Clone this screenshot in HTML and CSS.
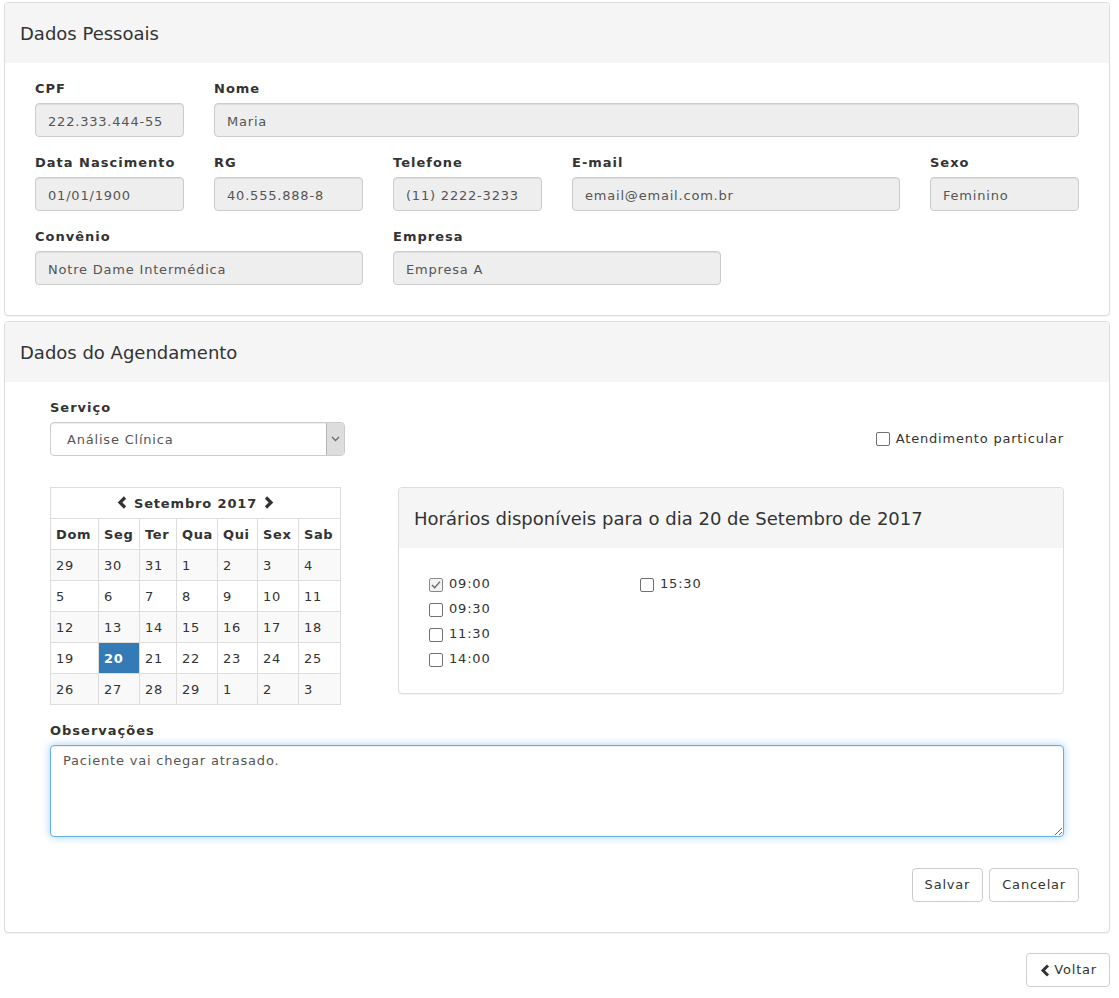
FILE: index.html
```html
<!DOCTYPE html>
<html lang="pt-BR">
<head>
<meta charset="utf-8">
<title>Agendamento</title>
<link rel="stylesheet" href="styles.css">
</head>
<body>
<div class="page">
  <section class="panel">
    <div class="panel-heading"><h3 class="panel-title">Dados Pessoais</h3></div>
    <div class="panel-body personal">
      <div class="field span-2"><label>CPF</label><input class="form-control" readonly value="222.333.444-55"></div>
      <div class="field span-10"><label>Nome</label><input class="form-control" readonly value="Maria"></div>
      <div class="field span-2"><label>Data Nascimento</label><input class="form-control" readonly value="01/01/1900"></div>
      <div class="field span-2"><label>RG</label><input class="form-control" readonly value="40.555.888-8"></div>
      <div class="field span-2"><label>Telefone</label><input class="form-control" readonly value="(11) 2222-3233"></div>
      <div class="field span-4"><label>E-mail</label><input class="form-control" readonly value="email@email.com.br"></div>
      <div class="field span-2"><label>Sexo</label><input class="form-control" readonly value="Feminino"></div>
      <div class="field span-4"><label>Convênio</label><input class="form-control" readonly value="Notre Dame Intermédica"></div>
      <div class="field span-4"><label>Empresa</label><input class="form-control" readonly value="Empresa A"></div>
    </div>
  </section>

  <section class="panel">
    <div class="panel-heading"><h3 class="panel-title">Dados do Agendamento</h3></div>
    <div class="panel-body agenda">
      <div class="agenda-fields">
        <div class="service-row">
          <div class="field service">
            <label>Serviço</label>
            <div class="select-wrap">
              <select class="form-control select"><option>Análise Clínica</option></select>
              <span class="select-arrow"><svg width="9" height="6" viewBox="0 0 9 6"><path d="M1 1 L4.5 4.5 L8 1" fill="none" stroke="#6a6a6a" stroke-width="1.3"/></svg></span>
            </div>
          </div>
          <label class="check-label">
            <svg class="box" width="14" height="14" viewBox="0 0 14 14"><rect x="0.5" y="0.5" width="13" height="13" rx="1.5" fill="#fff" stroke="#707070"/></svg>
            Atendimento particular
          </label>
        </div>

        <div class="schedule-row">
          <table class="calendar">
            <colgroup><col class="c1"><col class="c2"><col class="c3"><col class="c4"><col class="c5"><col class="c6"><col class="c7"></colgroup>
            <thead>
              <tr><th colspan="7" class="month">
                <svg class="chev" width="10" height="13" viewBox="0 0 10 13"><path d="M8 1.5 L3 6.5 L8 11.5" fill="none" stroke="#333" stroke-width="3.2"/></svg>
                <span>Setembro 2017</span>
                <svg class="chev" width="10" height="13" viewBox="0 0 10 13"><path d="M2 1.5 L7 6.5 L2 11.5" fill="none" stroke="#333" stroke-width="3.2"/></svg>
              </th></tr>
              <tr class="days"><th>Dom</th><th>Seg</th><th>Ter</th><th>Qua</th><th>Qui</th><th>Sex</th><th>Sab</th></tr>
            </thead>
            <tbody>
              <tr class="odd"><td>29</td><td>30</td><td>31</td><td>1</td><td>2</td><td>3</td><td>4</td></tr>
              <tr><td>5</td><td>6</td><td>7</td><td>8</td><td>9</td><td>10</td><td>11</td></tr>
              <tr class="odd"><td>12</td><td>13</td><td>14</td><td>15</td><td>16</td><td>17</td><td>18</td></tr>
              <tr><td>19</td><td class="active">20</td><td>21</td><td>22</td><td>23</td><td>24</td><td>25</td></tr>
              <tr class="odd"><td>26</td><td>27</td><td>28</td><td>29</td><td>1</td><td>2</td><td>3</td></tr>
            </tbody>
          </table>

          <div class="panel slots">
            <div class="panel-heading"><h3 class="panel-title">Horários disponíveis para o dia 20 de Setembro de 2017</h3></div>
            <div class="slots-body">
              <label class="slot"><svg class="box" width="14" height="14" viewBox="0 0 14 14"><rect x="0.5" y="0.5" width="13" height="13" rx="1.5" fill="#f2f2f2" stroke="#8a8a8a"/><path d="M3 7 L5.6 9.8 L11 3.6" fill="none" stroke="#666" stroke-width="1.3"/></svg>09:00</label>
              <label class="slot"><svg class="box" width="14" height="14" viewBox="0 0 14 14"><rect x="0.5" y="0.5" width="13" height="13" rx="1.5" fill="#fff" stroke="#707070"/></svg>09:30</label>
              <label class="slot"><svg class="box" width="14" height="14" viewBox="0 0 14 14"><rect x="0.5" y="0.5" width="13" height="13" rx="1.5" fill="#fff" stroke="#707070"/></svg>11:30</label>
              <label class="slot"><svg class="box" width="14" height="14" viewBox="0 0 14 14"><rect x="0.5" y="0.5" width="13" height="13" rx="1.5" fill="#fff" stroke="#707070"/></svg>14:00</label>
              <label class="slot"><svg class="box" width="14" height="14" viewBox="0 0 14 14"><rect x="0.5" y="0.5" width="13" height="13" rx="1.5" fill="#fff" stroke="#707070"/></svg>15:30</label>
            </div>
          </div>
        </div>

        <div class="field notes">
          <label>Observações</label>
          <textarea class="form-control textarea focused">Paciente vai chegar atrasado.</textarea>
        </div>
      </div>

      <div class="actions">
        <button class="btn">Salvar</button>
        <button class="btn">Cancelar</button>
      </div>
    </div>
  </section>

  <div class="back-row">
    <button class="btn back"><svg width="10" height="13" viewBox="0 0 10 13"><path d="M8 1.5 L3 6.5 L8 11.5" fill="none" stroke="#333" stroke-width="3"/></svg>Voltar</button>
  </div>
</div>
</body>
</html>
```

FILE: styles.css
```css
* { box-sizing: border-box; }

body {
  margin: 0;
  font-family: "DejaVu Sans", Verdana, sans-serif;
  font-size: 13px;
  line-height: 1.42857;
  color: #333;
  letter-spacing: 0.8px;
  background: #fff;
}

.page {
  padding: 2px 9px 0 4px;
}

.panel {
  background: #fff;
  border: 1px solid #ddd;
  border-radius: 4px;
  box-shadow: 0 1px 1px rgba(0, 0, 0, 0.05);
  margin-bottom: 5px;
}

.panel-heading {
  height: 60px;
  padding: 2px 15px 0;
  display: flex;
  align-items: center;
  background: #f5f5f5;
  border-radius: 3px 3px 0 0;
}

.panel-title {
  margin: 0;
  font-size: 18px;
  font-weight: normal;
  line-height: 20px;
  letter-spacing: 0;
  color: #333;
}

.panel-body {
  padding: 15px;
}

.personal {
  padding: 15px 30px;
  display: grid;
  grid-template-columns: repeat(12, 1fr);
  column-gap: 30px;
}

.span-2 { grid-column: span 2; }
.span-4 { grid-column: span 4; }
.span-10 { grid-column: span 10; }

.field {
  margin-bottom: 15px;
  min-width: 0;
}

.field > label {
  display: block;
  font-weight: bold;
  line-height: 22px;
  margin-bottom: 3px;
  letter-spacing: 1px;
}

.form-control {
  display: block;
  width: 100%;
  height: 34px;
  padding: 7px 12px 5px;
  font: inherit;
  letter-spacing: 0.8px;
  color: #555;
  background: #eee;
  border: 1px solid #ccc;
  border-radius: 4px;
  box-shadow: inset 0 1px 1px rgba(0, 0, 0, 0.075);
  outline: none;
}

/* Agendamento */
.agenda {
  padding: 15px 30px 15px;
}

.agenda-fields {
  padding: 0 15px;
}

.service-row {
  display: flex;
  justify-content: space-between;
  align-items: flex-end;
  margin-bottom: 31px;
}

.service {
  width: 295px;
  margin-bottom: 0;
}

.select-wrap {
  position: relative;
}

.select {
  appearance: none;
  -webkit-appearance: none;
  background: #fff;
  padding-left: 16px;
  height: 34px;
}

.select-arrow {
  position: absolute;
  top: 1px;
  right: 1px;
  bottom: 1px;
  width: 18px;
  background: #ddd;
  border-left: 1px solid #b5b5b5;
  border-radius: 0 3px 3px 0;
  display: flex;
  align-items: center;
  justify-content: center;
}

.check-label {
  display: flex;
  align-items: center;
  gap: 6px;
  height: 34px;
  color: #333;
}

.box {
  display: block;
  flex: none;
}

.schedule-row {
  display: grid;
  grid-template-columns: 318px 1fr;
  column-gap: 30px;
  align-items: start;
}

.calendar {
  border-collapse: collapse;
  table-layout: fixed;
  width: 290px;
}

.calendar col.c1 { width: 48px; }
.calendar col.c2 { width: 41px; }
.calendar col.c3 { width: 37px; }
.calendar col.c4 { width: 41px; }
.calendar col.c5 { width: 40px; }
.calendar col.c6 { width: 41px; }
.calendar col.c7 { width: 42px; }

.calendar th,
.calendar td {
  border: 1px solid #ddd;
  padding: 6px 5px 4px;
  line-height: 20px;
  text-align: left;
  white-space: nowrap;
  overflow: hidden;
}

.calendar th {
  font-weight: bold;
  letter-spacing: 0.6px;
}

.calendar th.month {
  text-align: center;
  letter-spacing: 0.85px;
  line-height: 19px;
  padding: 5px;
}

.calendar th.month > * {
  vertical-align: middle;
}

.calendar th.month .chev {
  display: inline-block;
  margin: 0 2px;
  position: relative;
  top: -1px;
}

.calendar tr.odd td {
  background: #f9f9f9;
}

.calendar td.active {
  background: #337ab7 !important;
  color: #fff;
  font-weight: bold;
}

.slots {
  margin-bottom: 0;
}

.slots-body {
  padding: 24px 15px 21px 30px;
  display: grid;
  grid-template-rows: repeat(4, 25px);
  grid-auto-flow: column;
  grid-template-columns: 211px 1fr;
}

.slot {
  display: flex;
  align-items: center;
  gap: 6px;
  height: 25px;
}

.notes {
  margin-top: 15px;
  margin-bottom: 0;
}

.textarea {
  height: 92px;
  padding-top: 6px;
  background: #fff;
  resize: vertical;
  line-height: 1.42857;
}

.focused {
  border-color: #66afe9;
  box-shadow: inset 0 1px 1px rgba(0, 0, 0, 0.075), 0 0 8px rgba(102, 175, 233, 0.6);
}

.actions {
  display: flex;
  justify-content: flex-end;
  gap: 6px;
  margin-top: 31px;
  margin-bottom: 15px;
}

.btn {
  display: inline-flex;
  align-items: center;
  gap: 4px;
  height: 34px;
  padding: 1px 12px 0;
  font: inherit;
  letter-spacing: 0.8px;
  color: #333;
  background: #fff;
  border: 1px solid #ccc;
  border-radius: 4px;
  cursor: pointer;
}

.back {
  padding-left: 13px;
}

.back-row {
  display: flex;
  justify-content: flex-end;
  margin-top: 20px;
}
```
